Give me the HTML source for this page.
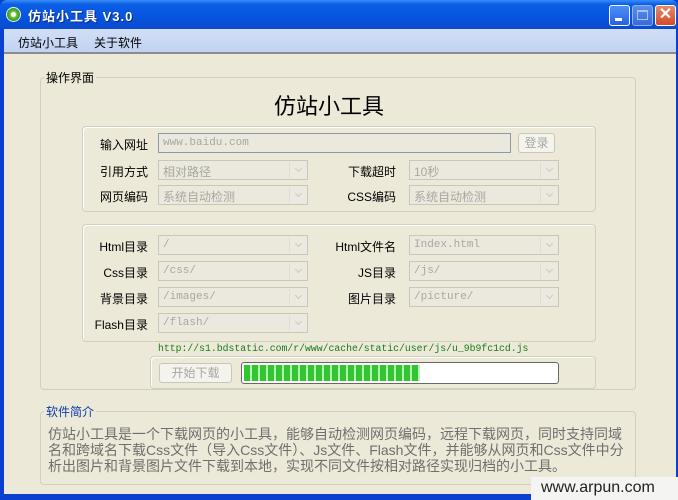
<!DOCTYPE html>
<html><head><meta charset="utf-8"><style>
*{margin:0;padding:0;box-sizing:border-box}
body{width:678px;height:500px;overflow:hidden;position:relative;background:#0a3fd0;font-family:"Liberation Sans","Noto Sans CJK SC","WenQuanYi Zen Hei",sans-serif;font-size:12px;color:#000}
.a{position:absolute}
#title{left:0;top:0;width:678px;height:29px;background:linear-gradient(#3a8cf8 0%,#0a5ee6 15%,#0654dd 60%,#0a4ad0 100%);border-radius:7px 7px 0 0}
#title .t{left:28px;top:6px;color:#fff;font-weight:bold;font-size:13px;text-shadow:1px 1px #0a2a80;letter-spacing:1px}
#body{left:4px;top:29px;width:672px;height:466px;background:#ece9d8}
#menu{left:4px;top:29px;width:672px;height:25px;background:linear-gradient(#d2def6,#c1d3f2);border-bottom:2px solid #8c8c8c}
.grp{border:1px solid #d0d0bf;border-radius:4px}
.pnl{border:1px solid #d0d0bf;border-radius:4px;box-shadow:inset 1px 1px #fff}
.lbl{text-align:right;width:80px;font-size:12px;color:#000}
.inp{height:20px;border:1px solid #c9c7ba;background:#ebe9de;color:#a8a8a0;font-size:11px;padding:3px 4px;font-family:"Liberation Mono","Noto Sans CJK SC",monospace}
.zh{font-family:"Liberation Sans","Noto Sans CJK SC",sans-serif;font-size:12px;padding-top:2px}
.cb::after{content:"";position:absolute;right:1px;top:1px;width:16px;height:16px;background:#eceae0;border-left:1px solid #e0ded4}
.cb::before{content:"";position:absolute;right:6px;top:5px;width:4px;height:4px;border-right:1px solid #c8c8c0;border-bottom:1px solid #c8c8c0;transform:rotate(45deg);z-index:2}
.btn{border:1px solid #c9c7ba;border-radius:3px;background:#f4f3ee;color:#a8a8a0;text-align:center;font-size:12px}
</style></head><body>
<div id="title" class="a">
 <div class="a" style="left:6px;top:7px;width:15px;height:15px;border-radius:50%;background:radial-gradient(circle at 50% 50%,#fff 0 2px,#6cc838 3px,#2d8a1a 7px);border:1px solid #e0f0ff"></div>
 <div class="a t">仿站小工具 V3.0</div>
 <div class="a" style="left:609px;top:5px;width:21px;height:21px;border:1px solid #fff;border-radius:3px;background:linear-gradient(#4d8ff8,#2663e0)"><div class="a" style="left:5px;top:12px;width:7px;height:3px;background:#fff"></div></div>
 <div class="a" style="left:632px;top:5px;width:21px;height:21px;border:1px solid #8fb0ef;border-radius:3px;background:linear-gradient(#5a8ee8,#3a6ad8)"><div class="a" style="left:4px;top:4px;width:11px;height:10px;border:1px solid #a8c0f0;border-top-width:2px"></div></div>
 <div class="a" style="left:655px;top:5px;width:21px;height:21px;border:1px solid #fff;border-radius:3px;background:linear-gradient(#e88a6a,#d44a28);color:#fff;font-weight:bold;font-size:16px;line-height:18px;text-align:center">✕</div>
</div>
<div id="body" class="a"></div>
<div id="menu" class="a"><span class="a" style="left:14px;top:5px">仿站小工具</span><span class="a" style="left:90px;top:5px">关于软件</span></div>
<div class="a" style="left:0;top:29px;width:4px;height:471px;background:#0a3fd0"></div>
<div class="a" style="left:676px;top:29px;width:2px;height:471px;background:#0a3fd0"></div>

<div class="a grp" style="left:40px;top:77px;width:596px;height:313px"></div>
<div class="a" style="left:44px;top:69px;background:#ece9d8;padding:0 2px">操作界面</div>
<div class="a" style="left:274px;top:89px;font-size:22px">仿站小工具</div>

<div class="a pnl" style="left:82px;top:126px;width:514px;height:86px"></div>
<div class="a lbl" style="left:68px;top:136px">输入网址</div>
<div class="a inp" style="left:158px;top:133px;width:353px;border-color:#8c9aa8">www.baidu.com</div>
<div class="a btn" style="left:518px;top:133px;width:37px;height:20px;line-height:18px">登录</div>
<div class="a lbl" style="left:68px;top:163px">引用方式</div>
<div class="a inp cb zh" style="left:158px;top:160px;width:150px">相对路径</div>
<div class="a lbl" style="left:316px;top:163px">下载超时</div>
<div class="a inp cb zh" style="left:409px;top:160px;width:150px">10秒</div>
<div class="a lbl" style="left:68px;top:188px">网页编码</div>
<div class="a inp cb zh" style="left:158px;top:185px;width:150px">系统自动检测</div>
<div class="a lbl" style="left:316px;top:188px">CSS编码</div>
<div class="a inp cb zh" style="left:409px;top:185px;width:150px">系统自动检测</div>

<div class="a pnl" style="left:82px;top:224px;width:514px;height:118px"></div>
<div class="a lbl" style="left:68px;top:238px">Html目录</div>
<div class="a inp cb" style="left:158px;top:235px;width:150px">/</div>
<div class="a lbl" style="left:316px;top:238px">Html文件名</div>
<div class="a inp cb" style="left:409px;top:235px;width:150px">Index.html</div>
<div class="a lbl" style="left:68px;top:264px">Css目录</div>
<div class="a inp cb" style="left:158px;top:261px;width:150px">/css/</div>
<div class="a lbl" style="left:316px;top:264px">JS目录</div>
<div class="a inp cb" style="left:409px;top:261px;width:150px">/js/</div>
<div class="a lbl" style="left:68px;top:290px">背景目录</div>
<div class="a inp cb" style="left:158px;top:287px;width:150px">/images/</div>
<div class="a lbl" style="left:316px;top:290px">图片目录</div>
<div class="a inp cb" style="left:409px;top:287px;width:150px">/picture/</div>
<div class="a lbl" style="left:68px;top:316px">Flash目录</div>
<div class="a inp cb" style="left:158px;top:313px;width:150px">/flash/</div>

<div class="a" style="left:158px;top:343px;color:#1a7a1a;font-size:9.8px;font-family:'Liberation Mono',monospace">http://s1.bdstatic.com/r/www/cache/static/user/js/u_9b9fc1cd.js</div>

<div class="a pnl" style="left:150px;top:356px;width:446px;height:33px"></div>
<div class="a btn" style="left:159px;top:363px;width:73px;height:20px;line-height:18px">开始下载</div>
<div class="a" style="left:241px;top:362px;width:318px;height:22px;border:1px solid #686868;border-radius:3px;background:#fff;padding:2px"><div style="width:176px;height:16px;background:repeating-linear-gradient(90deg,#2ec82e 0 6px,#bfeebf 6px 8px)"></div></div>

<div class="a grp" style="left:40px;top:411px;width:596px;height:74px"></div>
<div class="a" style="left:44px;top:403px;background:#ece9d8;padding:0 2px;color:#0a3ca8">软件简介</div>
<div class="a" style="left:48px;top:426px;width:620px;font-size:14px;line-height:16px;color:#6e6e6e;white-space:nowrap">仿站小工具是一个下载网页的小工具，能够自动检测网页编码，远程下载网页，同时支持同域<br>名和跨域名下载Css文件（导入Css文件）、Js文件、Flash文件，并能够从网页和Css文件中分<br>析出图片和背景图片文件下载到本地，实现不同文件按相对路径实现归档的小工具。</div>

<div class="a" style="left:0;top:494px;width:678px;height:6px;background:#0a3fd0"></div>
<div class="a" style="left:531px;top:477px;width:147px;height:23px;background:#f4f4f2;color:#222;font-size:16px;padding:2px 0 0 10px">www.arpun.com</div>
</body></html>
